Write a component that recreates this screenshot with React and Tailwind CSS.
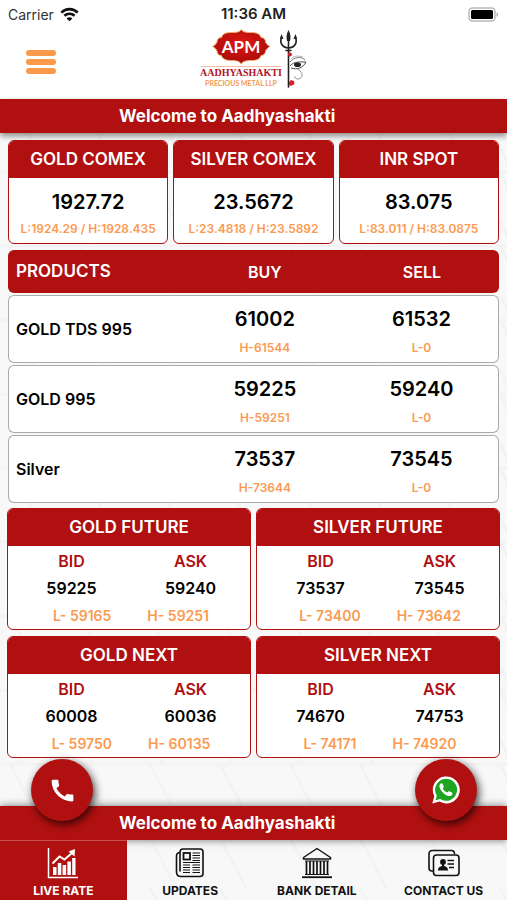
import React from "react";
import { MdCall } from "react-icons/md";

const comex = [
  { name: "GOLD COMEX", value: "1927.72", range: "L:1924.29 / H:1928.435" },
  { name: "SILVER COMEX", value: "23.5672", range: "L:23.4818 / H:23.5892" },
  { name: "INR SPOT", value: "83.075", range: "L:83.011 / H:83.0875" },
];

const products = [
  { name: "GOLD TDS 995", buy: "61002", high: "H-61544", sell: "61532", low: "L-0" },
  { name: "GOLD 995", buy: "59225", high: "H-59251", sell: "59240", low: "L-0" },
  { name: "Silver", buy: "73537", high: "H-73644", sell: "73545", low: "L-0" },
];

const futures = [
  { name: "GOLD FUTURE", bid: "59225", ask: "59240", low: "L- 59165", high: "H- 59251" },
  { name: "SILVER FUTURE", bid: "73537", ask: "73545", low: "L- 73400", high: "H- 73642" },
  { name: "GOLD NEXT", bid: "60008", ask: "60036", low: "L- 59750", high: "H- 60135" },
  { name: "SILVER NEXT", bid: "74670", ask: "74753", low: "L- 74171", high: "H- 74920" },
];

function WifiIcon() {
  return (
    <svg width="19" height="15" viewBox="0 0 19 15" fill="none" stroke="#111" strokeWidth="2.6" aria-hidden="true">
      <path d="M1.3 5.6C6 0.9 13 0.9 17.7 5.6" />
      <path d="M4.4 8.8C7.3 6 11.7 6 14.6 8.8" />
      <path d="M9.5 14.3L6.6 11.4C8.2 9.9 10.8 9.9 12.4 11.4Z" fill="#111" stroke="none" />
    </svg>
  );
}

function BatteryIcon() {
  return (
    <svg width="31" height="15" viewBox="0 0 31 15" aria-hidden="true">
      <rect x="1" y="1" width="26" height="13" rx="3.5" fill="#fff" stroke="#b9b9b9" strokeWidth="1.5" />
      <rect x="3" y="3" width="22" height="9" rx="1.5" fill="#000" />
      <path d="M28.5 5.2C30.6 6 30.6 9 28.5 9.8Z" fill="#b0b0b0" />
    </svg>
  );
}

function Logo() {
  return (
    <svg width="109" height="62" viewBox="0 0 109 62" role="img" aria-label="Aadhyashakti Precious Metal LLP">
      <defs>
        <radialGradient id="badge" cx="50%" cy="40%" r="60%">
          <stop offset="0" stopColor="#e0170f" />
          <stop offset="1" stopColor="#a80c0c" />
        </radialGradient>
      </defs>
      <path
        d="M42.200 1.500C43.500 4 47 4.500 52 4.500C57 4.500 61 5.500 62 9.500C65 9.500 66.500 11.500 66.500 14C67.500 16 69 17.500 71 18.500C69 19.500 67.500 21 66.500 23C66.500 25.500 65 27.500 62 27.500C61 31.500 57 32.500 52 32.500C47 32.500 43.500 33.500 42.200 36C41 33.500 37.500 32.500 32.500 32.500C27.500 32.500 23.500 31.500 22.500 27.500C19.500 27.500 18 25.500 18 23C17 21 15.500 19.500 13.500 18.500C15.500 17.500 17 16 18 14C18 11.500 19.500 9.500 22.500 9.500C23.500 5.500 27.500 4.500 32.500 4.500C37.500 4.500 41 4 42.200 1.500Z"
        fill="url(#badge)"
        stroke="#f0b070"
        strokeWidth="1"
      />
      <text x="42" y="25" textAnchor="middle" className="fill-white font-['Lato',sans-serif] text-[17px] font-bold">APM</text>
      <path d="M2 38.500H82" stroke="#f0a080" strokeWidth="0.700" />
      <text x="42" y="48" textAnchor="middle" className="fill-[#b0141c] font-['Liberation_Serif',serif] text-[10px] font-bold">AADHYASHAKTI</text>
      <text x="42" y="58" textAnchor="middle" className="fill-[#f59a55] font-['Lato',sans-serif] text-[7px] font-bold">PRECIOUS METAL LLP</text>
      <g fill="none" stroke="#222" strokeLinecap="round">
        <path d="M89.500 9V59" strokeWidth="1.600" />
        <path d="M82.500 9C80.500 15 83 19.500 89.500 20C96 19.500 98.500 15 96.500 9" strokeWidth="1.700" />
        <path d="M87 22.500H92" strokeWidth="1.500" />
      </g>
      <path d="M89.500 2C91.500 6 92 9 91 13H88C87 9 87.500 6 89.500 2Z" fill="#222" />
      <path d="M82.500 6L84.500 11L81 10.500ZM96.500 6L94.500 11L98 10.500Z" fill="#222" />
      <circle cx="91" cy="26.500" r="2" fill="#d8202a" />
      <path d="M90 54L92 52L95 53L95.500 56L92 58L90 57Z" fill="#d8202a" />
      <g fill="none" stroke="#333" strokeWidth="0.900">
        <path d="M91 34C95 29 102 28 106 32" stroke="#666" />
        <path d="M91 38C95 33 102 34 107 34C104 40 98 42 92 40" />
        <path d="M98 41C103 43 105 48 101 50.500C98 52 95 50 96 48" stroke="#888" />
        <path d="M92 31C96 27 100 28 104 29" stroke="#aaa" />
      </g>
      <ellipse cx="98.500" cy="36.800" rx="3.500" ry="2.300" fill="#222" />
    </svg>
  );
}

function Backdrop() {
  return (
    <svg className="absolute inset-0 -z-10 size-full" aria-hidden="true">
      <defs>
        <pattern id="weave" width="140" height="74" patternUnits="userSpaceOnUse">
          <path d="M0 24H140M10 24L36 74M80 0L93 24M80 24L106 74M10 0L23 24" fill="none" stroke="#f3f3f4" strokeWidth="3" />
        </pattern>
      </defs>
      <rect width="100%" height="100%" fill="#f8f8f9" />
      <rect width="100%" height="100%" fill="url(#weave)" />
    </svg>
  );
}

function WhatsAppIcon() {
  return (
    <svg width="30" height="30" viewBox="0 0 30 30" aria-hidden="true">
      <path d="M1.300 28.500L3.300 21.200A13.500 13.500 0 1 1 8.500 26.600Z" fill="#fff" />
      <path d="M4.500 25.300L5.800 20.700A11 11 0 1 1 9.200 24.100Z" fill="#1fa51f" />
      <path
        d="M11.300 8.600C10.700 7.900 9.700 8.200 9 9.200C7.900 10.900 8.500 13 10 15.200C12 18.200 14.600 20.300 17.300 20.900C19.200 21.300 20.900 20.500 21.300 19.200C21.600 18.200 21.500 17.900 20.800 17.500L18.300 16.300C17.700 16 17.400 16.200 17 16.700L16.200 17.600C14.200 16.900 12.700 15.400 11.700 13.600L12.500 12.500C12.800 12.100 12.800 11.800 12.600 11.300Z"
        fill="#fff"
      />
    </svg>
  );
}

function ChartIcon() {
  return (
    <svg width="32" height="32" viewBox="0 0 32 32" aria-hidden="true">
      <path d="M1.500 1V30.500H31" fill="none" stroke="currentColor" strokeWidth="1.500" />
      <path d="M6 20H9.500V28H6ZM10.800 16H14.300V28H10.800ZM15.600 18H19.100V28H15.600ZM20.400 14.500H23.900V28H20.400ZM25.200 11H28.500V28H25.200Z" fill="currentColor" />
      <path d="M5.500 16.500L12.500 9.500L17.500 12.500L25.500 5.500" fill="none" stroke="currentColor" strokeWidth="2" />
      <path d="M21.500 4.500L28 2L27.500 9.500Z" fill="currentColor" />
    </svg>
  );
}

function NewsIcon() {
  return (
    <svg width="32" height="32" viewBox="0 0 32 32" fill="none" stroke="currentColor" aria-hidden="true">
      <path d="M6 5.500C3.500 5.500 2.500 7 2.500 9V25C2.500 28 4.500 29.500 7 29.500H26C28 29.500 29 28 29 26.500V5C29 3 28 2 26 2H9C7 2 6 3 6 5V24.500" strokeWidth="1.600" />
      <rect x="9.500" y="6" width="6.500" height="6.500" strokeWidth="1.800" />
      <path d="M18.500 6H26M18.500 8.500H26M18.500 11H26M18.500 13.500H26M9 15.500H26M9 18H16M18.500 18H26M9 20.500H16M18.500 20.500H26M9 23H16M18.500 23H26M9 25.500H16M18.500 25.500H26" strokeWidth="1" />
    </svg>
  );
}

function BankIcon() {
  return (
    <svg width="32" height="32" viewBox="0 0 32 32" fill="none" stroke="currentColor" aria-hidden="true">
      <path d="M2.500 10.500L16 1.500L29.500 10.500V12H2.500Z" strokeWidth="1.500" strokeLinejoin="round" />
      <path d="M4 14H28M4 27.500H28" strokeWidth="1.200" />
      <path d="M5.500 14V27M9 14V27M12.500 14V27M16 14V27M19.500 14V27M23 14V27M26.500 14V27" strokeWidth="1.700" />
      <path d="M1 30.200H31" strokeWidth="1.800" />
    </svg>
  );
}

function ContactIcon() {
  return (
    <svg width="32" height="32" viewBox="0 0 32 32" fill="none" stroke="currentColor" aria-hidden="true">
      <path d="M5 24H4C2.300 24 1 23 1 21V7C1 5 2.300 3.500 4 3.500H23.500C25.500 3.500 26.500 5 26.500 7" strokeWidth="1.600" />
      <rect x="5.500" y="8" width="25.500" height="20.500" rx="3" strokeWidth="1.600" />
      <circle cx="15" cy="15" r="2.900" fill="currentColor" stroke="none" />
      <path d="M10 23.500C10 20 12 19.500 14 19V17H16V19C18 19.500 20 20 20 23.500Z" fill="currentColor" stroke="none" />
      <path d="M19.500 13.500H26M19.500 17H26M21 20.500H26" strokeWidth="1.400" />
    </svg>
  );
}

const tabs = [
  { label: "LIVE RATE", Icon: ChartIcon, active: true },
  { label: "UPDATES", Icon: NewsIcon },
  { label: "BANK DETAIL", Icon: BankIcon },
  { label: "CONTACT US", Icon: ContactIcon },
];

function CardTitle({ children }) {
  return <h2 className="bg-[#b01010] text-center text-[17px] leading-[37px] font-semibold whitespace-nowrap text-white">{children}</h2>;
}

function FutureCard({ item }) {
  return (
    <section className="overflow-hidden rounded-md border border-[#b01010] bg-white">
      <CardTitle>{item.name}</CardTitle>
      <div className="pt-0.5 pl-1">
        <table className="w-full table-fixed text-center text-[16px] leading-[27px]">
          <thead>
            <tr className="text-[#b01010]">
              <th className="font-semibold">BID</th>
              <th className="font-semibold">ASK</th>
            </tr>
          </thead>
          <tbody>
            <tr className="font-semibold text-black">
              <td>{item.bid}</td>
              <td>{item.ask}</td>
            </tr>
          </tbody>
        </table>
        <p className="flex justify-center gap-9 text-[14px] leading-[27px] font-semibold text-[#fb9a50]">
          <span>{item.low}</span>
          <span>{item.high}</span>
        </p>
      </div>
    </section>
  );
}

export default function App() {
  return (
    <div className="relative isolate flex min-h-screen flex-col font-['Inter',sans-serif]">
      <Backdrop />
      <header className="bg-white">
        <div className="grid h-7 grid-cols-3 items-center px-2 text-[15px]">
          <div className="flex items-center gap-1.5 text-[14px] text-[#333]">
            Carrier <WifiIcon />
          </div>
          <time className="text-center font-semibold text-[#222]">11:36 AM</time>
          <div className="flex justify-end">
            <BatteryIcon />
          </div>
        </div>
        <div className="grid h-[71px] grid-cols-3 items-start px-6">
          <button type="button" aria-label="Menu" className="mt-5 flex w-[34px] flex-col gap-[3px] p-0.5">
            <span className="h-1.5 w-full rounded-full bg-[#fb9a4b]" />
            <span className="h-1.5 w-full rounded-full bg-[#fb9a4b]" />
            <span className="h-1.5 w-full rounded-full bg-[#fb9a4b]" />
          </button>
          <div className="flex justify-center">
            <Logo />
          </div>
        </div>
      </header>

      <div className="bg-[#b01010] shadow-[0_3px_6px_rgba(0,0,0,0.45)]">
        <p className="ml-[119px] text-[17px] leading-[34px] font-bold whitespace-nowrap text-white">Welcome to Aadhyashakti</p>
      </div>

      <main className="flex-1 px-[7px] pt-[7px]">
        <div className="mx-px grid grid-cols-3 gap-[5px]">
          {comex.map((c) => (
            <section key={c.name} className="overflow-hidden rounded-md border border-[#b01010] bg-white text-center">
              <CardTitle>{c.name}</CardTitle>
              <p className="pt-2 text-[20px] leading-8 font-semibold text-black">{c.value}</p>
              <p className="pb-[3px] text-[12px] leading-[22px] font-semibold whitespace-nowrap text-[#fb9a50]">{c.range}</p>
            </section>
          ))}
        </div>

        <div className="mx-px mt-1">
          <table className="w-full table-fixed border-separate border-spacing-x-0 border-spacing-y-0.5 text-center">
            <thead>
              <tr className="h-[43px] text-[16px] text-white">
                <th className="rounded-l-md bg-[#b01010] pl-2 text-left text-[17px] font-semibold">PRODUCTS</th>
                <th className="w-[32%] bg-[#b01010] pl-[3px] font-semibold">BUY</th>
                <th className="w-[32%] rounded-r-md bg-[#b01010] pl-[3px] font-semibold">SELL</th>
              </tr>
            </thead>
            <tbody>
              {products.map((p) => (
                <tr key={p.name} className="h-[68px] font-semibold text-black">
                  <th scope="row" className="rounded-l-md border-y border-l border-[#aaa] bg-white pl-[7px] text-left text-[16px] font-semibold">
                    {p.name}
                  </th>
                  <td className="border-y border-[#aaa] bg-white pt-1.5 pl-[3px] text-[20px]">
                    <div className="leading-8">{p.buy}</div>
                    <div className="text-[12px] leading-[26px] text-[#fb9a50]">{p.high}</div>
                  </td>
                  <td className="rounded-r-md border-y border-r border-[#aaa] bg-white pt-1.5 pl-[3px] text-[20px]">
                    <div className="leading-8">{p.sell}</div>
                    <div className="text-[12px] leading-[26px] text-[#fb9a50]">{p.low}</div>
                  </td>
                </tr>
              ))}
            </tbody>
          </table>
        </div>

        <div className="mt-[3px] grid grid-cols-2 gap-x-[5px] gap-y-1.5">
          {futures.map((f) => (
            <FutureCard key={f.name} item={f} />
          ))}
        </div>
      </main>

      <footer>
        <div className="relative bg-[#b01010] shadow-[0_0_8px_rgba(0,0,0,0.55)]">
          <p className="ml-[119px] text-[17px] leading-[34px] font-bold whitespace-nowrap text-white">Welcome to Aadhyashakti</p>
          <button
            type="button"
            aria-label="Call"
            className="absolute -top-[47px] left-[31px] flex size-[62px] items-center justify-center rounded-full bg-[#b01010] text-white shadow-[2px_3px_8px_rgba(0,0,0,0.75)]"
          >
            <MdCall size={29} />
          </button>
          <button
            type="button"
            aria-label="WhatsApp"
            className="absolute -top-[47px] right-[30px] flex size-[62px] items-center justify-center rounded-full bg-[#b01010] shadow-[2px_3px_8px_rgba(0,0,0,0.75)]"
          >
            <WhatsAppIcon />
          </button>
        </div>
        <nav className="relative grid grid-cols-4">
          {tabs.map(({ label, Icon, active }) => (
            <button
              key={label}
              type="button"
              className={
                active
                  ? "flex h-[60px] flex-col items-center border-t border-[#c85050] bg-[#b01010] pt-1.5 text-white"
                  : "flex h-[60px] flex-col items-center border-t border-transparent pt-1.5 text-[#111]"
              }
            >
              <Icon />
              <span className="mt-1 text-[12px] leading-4 font-bold whitespace-nowrap">{label}</span>
            </button>
          ))}
        </nav>
      </footer>
    </div>
  );
}
